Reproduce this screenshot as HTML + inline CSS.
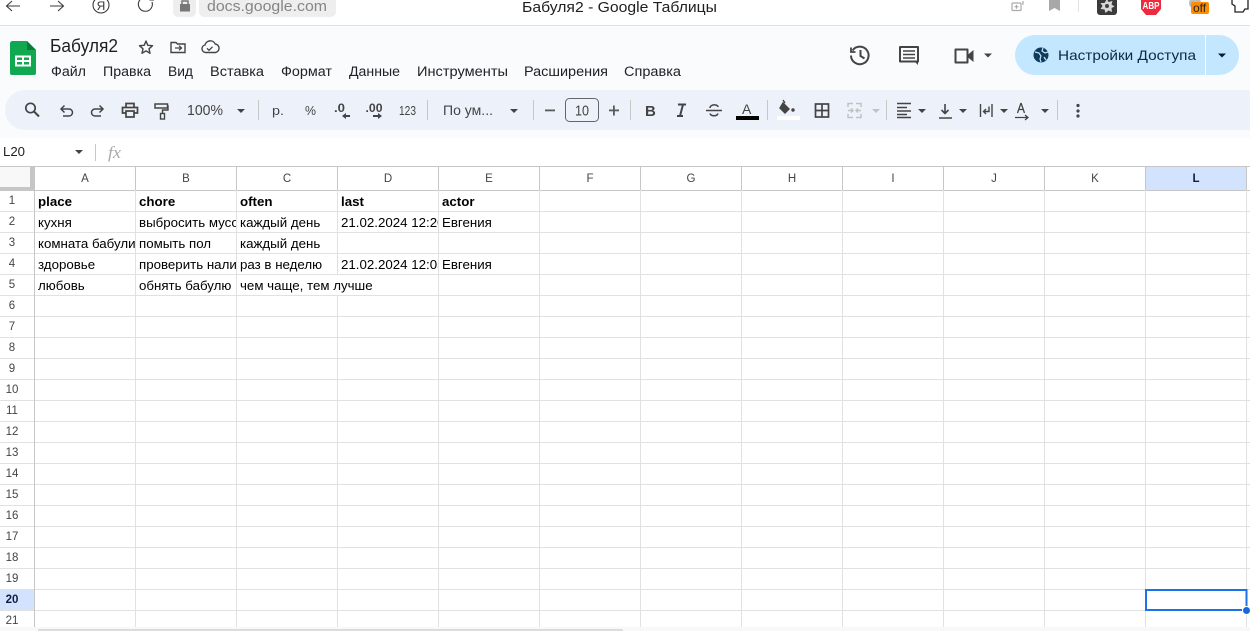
<!DOCTYPE html>
<html><head><meta charset="utf-8"><style>
html,body{margin:0;padding:0;width:1250px;height:631px;overflow:hidden;background:#fff}
svg{position:absolute;left:0;top:0;font-family:"Liberation Sans",sans-serif}
.c{position:absolute;height:20px;font:13.3px/22px "Liberation Sans",sans-serif;color:#000;white-space:nowrap;overflow:hidden;background:#fff;padding-left:3px;box-sizing:border-box}
.b{font-weight:bold}
</style></head><body>
<svg width="1250" height="631" viewBox="0 0 1250 631" xmlns="http://www.w3.org/2000/svg">
<rect width="1250" height="25" fill="#fff"/>
<rect y="25" width="1250" height="1" fill="#e0e0e0"/>
<rect y="26" width="1250" height="112" fill="#f9fbfd"/>
<rect y="138" width="1250" height="29" fill="#fff"/>
<!-- browser bar -->
<g fill="none" stroke="#3a3a3a" stroke-width="1.100">
<path d="M20 6H7M12 1L6.500 6l5.500 5"/>
<path d="M50 6H63M58 1l5.500 5L58 11"/>
<circle cx="101" cy="5" r="8"/>
<path d="M152 2a7 7 0 1 1-2-3M150 -4v4h4"/>
</g>
<text x="101" y="10" font-size="12" text-anchor="middle" fill="#333">Я</text>
<rect x="173" y="-5" width="23" height="22" rx="5" fill="#eeeeee"/>
<rect x="199" y="-5" width="137" height="22" rx="5" fill="#eeeeee"/>
<path d="M180 4h10v7.500h-10z" fill="#777"/><path d="M182 4V1h6v3" fill="none" stroke="#777" stroke-width="1.500"/>
<text x="207" y="11" font-size="15" fill="#858585" textLength="120" lengthAdjust="spacingAndGlyphs">docs.google.com</text>
<text x="522" y="12" font-size="15" fill="#202020" textLength="195" lengthAdjust="spacingAndGlyphs">Бабуля2 - Google Таблицы</text>
<!-- extensions -->
<g fill="none" stroke="#aaa" stroke-width="1.200"><rect x="1012" y="3" width="9" height="7.500" rx="1"/><path d="M1014.500 6.700h4M1016.500 4.700v4M1023 1v3h-1"/></g>
<path d="M1049 0h11v11l-5.500-3-5.500 3z" fill="#a8a8a8"/>
<rect x="1078" y="0" width="1" height="12" fill="#e3e3e3"/>
<rect x="1097" y="-3" width="20" height="18" rx="3" fill="#3b3b3b"/>
<path d="M1107 -1l1.500 3 4-1-1 3.500 3 2-3 1.500 .5 4-3.500-1.500-3 2.500-1-3.500-4-.5 2-3-2-3 4 0z" fill="#d8d8d8"/>
<circle cx="1107" cy="6" r="2" fill="#444"/>
<path d="M1141 -3h20v12l-5 6h-10l-5-6z" fill="#ee2a3f"/>
<text x="1151" y="9" font-size="10.500" font-weight="bold" fill="#fff" text-anchor="middle" textLength="17" lengthAdjust="spacingAndGlyphs">ABP</text>
<circle cx="1195" cy="3" r="6" fill="#bbb"/>
<rect x="1191" y="2" width="18" height="12" rx="2" fill="#ff8c00"/>
<text x="1199.500" y="12" font-size="12" fill="#222" text-anchor="middle">off</text>
<path d="M1232 0v4l3 2v6h8l2-3h3V0" fill="#fff" stroke="#222" stroke-width="1.300"/>
<!-- logo -->
<path d="M12.500 41H27l9 9v23a2 2 0 0 1-2 2H12a2 2 0 0 1-2-2V43.500a2.500 2.500 0 0 1 2.500-2.500z" fill="#10a850"/>
<path d="M27 41l9 9h-9z" fill="#0b7a3c"/>
<path d="M15 55.500h16v11H15z" fill="#fff"/>
<path d="M17 57.500h5v2.500h-5zM24 57.500h5v2.500h-5zM17 62h5v2.500h-5zM24 62h5v2.500h-5z" fill="#10a850"/>
<text x="50" y="52" font-size="18" fill="#1f1f1f" textLength="68" lengthAdjust="spacingAndGlyphs">Бабуля2</text>
<g fill="none" stroke="#444" stroke-width="1.400">
<path d="M146 41l1.800 4.300 4.700.4-3.500 3.100 1 4.500-4-2.400-4 2.400 1-4.500-3.500-3.100 4.700-.4z" stroke-linejoin="round"/>
<path d="M171 42.500h5l1.500 1.500h7.500v8.500h-14z"/>
<path d="M175 48h6M179 45.700l2.500 2.300-2.500 2.300" stroke-width="1.300"/>
<path d="M205.500 52.500a3.800 3.800 0 0 1-.5-7.500 5.500 5.500 0 0 1 10.300-1 4.300 4.300 0 0 1 .2 8.500z"/>
<path d="M207 48.300l2 2 3.500-3.500" stroke-width="1.300"/>
</g>
<g font-size="13.500" fill="#202124">
<text x="51" y="76" textLength="35" lengthAdjust="spacingAndGlyphs">Файл</text>
<text x="103" y="76" textLength="48" lengthAdjust="spacingAndGlyphs">Правка</text>
<text x="168" y="76" textLength="25" lengthAdjust="spacingAndGlyphs">Вид</text>
<text x="210" y="76" textLength="54" lengthAdjust="spacingAndGlyphs">Вставка</text>
<text x="281" y="76" textLength="51" lengthAdjust="spacingAndGlyphs">Формат</text>
<text x="349" y="76" textLength="51" lengthAdjust="spacingAndGlyphs">Данные</text>
<text x="417" y="76" textLength="91" lengthAdjust="spacingAndGlyphs">Инструменты</text>
<text x="524" y="76" textLength="84" lengthAdjust="spacingAndGlyphs">Расширения</text>
<text x="624" y="76" textLength="57" lengthAdjust="spacingAndGlyphs">Справка</text>
</g>
<!-- right header -->
<g fill="none" stroke="#444" stroke-width="2">
<path d="M852.500 50.500a8.800 8.800 0 1 1-1.500 5"/><path d="M851 47.500v4.500h4.500" stroke-width="1.800"/><path d="M860.500 50v6l4 2.500"/>
<path d="M900 47h18v14.500h-18z" stroke-linejoin="round"/>
<path d="M903 51h12M903 54.500h12M903 58h12" stroke-width="1.500"/>
<path d="M955.500 49.500h12v13h-12z" stroke-linejoin="round"/>
</g>
<path d="M914 61h4v4z" fill="#444"/>
<path d="M967.500 55l6-5v12l-6-5z" fill="#444"/>
<path d="M984 53.500h8l-4 4z" fill="#444"/>
<rect x="1015" y="35" width="224" height="40" rx="20" fill="#c2e7ff"/>
<rect x="1205" y="35" width="1" height="40" fill="#fff"/>
<circle cx="1041" cy="55" r="7.500" fill="#0f3a5a"/>
<path d="M1035 52l4 1 2 3-1 3 1 3M1043 48l-1 3 3 2 3-1M1044 57l2 3" fill="none" stroke="#c2e7ff" stroke-width="1.200"/>
<text x="1058" y="60" font-size="14" fill="#0b2a43" textLength="138" lengthAdjust="spacingAndGlyphs">Настройки Доступа</text>
<path d="M1218 53.500h8l-4 4z" fill="#001d35"/>
<!-- toolbar -->
<path d="M25 90H1250V130H25a20 20 0 0 1-20-20a20 20 0 0 1 20-20z" fill="#edf2fa"/>
<g fill="none" stroke="#444" stroke-width="1.700">
<circle cx="30.500" cy="108" r="4.700"/><path d="M34 111.500l5 5" stroke-width="2"/>
<path d="M62 109h7a3.500 3.500 0 0 1 0 7h-6M64.500 105.500L61 109l3.500 3.500" stroke-width="1.500"/>
<path d="M102 109h-7a3.500 3.500 0 0 0 0 7h6M99.500 105.500L103 109l-3.500 3.500" stroke-width="1.500"/>
<path d="M126 108v-4.500h8v4.500M126 113h-3.500v-5.500h15v5.500H134M126 111h8v6h-8z"/>
<rect x="155" y="104" width="12.500" height="4" stroke-width="1.500"/>
<path d="M167.500 106h.500v4h-5.500v3" stroke-width="1.400"/>
<rect x="160.500" y="113.500" width="4" height="5.500" stroke-width="1.400"/>
</g>
<g font-size="14" fill="#444">
<text x="187" y="115" font-size="15" textLength="36" lengthAdjust="spacingAndGlyphs">100%</text>
<text x="272" y="115" font-size="13" textLength="12" lengthAdjust="spacingAndGlyphs">р.</text>
<text x="305" y="115" font-size="13" textLength="11" lengthAdjust="spacingAndGlyphs">%</text>
<text x="334" y="112" font-size="12" font-weight="bold" textLength="11" lengthAdjust="spacingAndGlyphs">.0</text>
<text x="365.500" y="112" font-size="12" font-weight="bold" textLength="17" lengthAdjust="spacingAndGlyphs">.00</text>
<text x="399" y="115" font-size="12.500" textLength="17" lengthAdjust="spacingAndGlyphs">123</text>
<text x="443" y="115" font-size="14" textLength="50" lengthAdjust="spacingAndGlyphs">По ум...</text>
<text x="575" y="115.500" font-size="15" textLength="14" lengthAdjust="spacingAndGlyphs">10</text>
</g>
<g fill="#444">
<path d="M237 109h8l-4 4zM510 109h8l-4 4zM918 109h8l-4 4zM959 109h8l-4 4zM1000 109h8l-4 4zM1041 109h8l-4 4z"/>
<path d="M342 116l4-3v2h4v2h-4v2zM373 115h5v-2l4 3-4 3v-2h-5z"/>
<rect x="258" y="100" width="1" height="20" fill="#c7c7c7"/>
<rect x="427" y="100" width="1" height="20" fill="#c7c7c7"/>
<rect x="533" y="100" width="1" height="20" fill="#c7c7c7"/>
<rect x="630" y="100" width="1" height="20" fill="#c7c7c7"/>
<rect x="767" y="100" width="1" height="20" fill="#c7c7c7"/>
<rect x="886" y="100" width="1" height="20" fill="#c7c7c7"/>
<rect x="1057" y="100" width="1" height="20" fill="#c7c7c7"/>
<rect x="545" y="109.500" width="10" height="1.800" fill="#5a5a5a"/>
<rect x="609" y="109.500" width="10" height="1.800" fill="#5a5a5a"/><rect x="613" y="105.500" width="1.800" height="10" fill="#5a5a5a"/>
<circle cx="1078" cy="105.500" r="1.600"/><circle cx="1078" cy="111" r="1.600"/><circle cx="1078" cy="116" r="1.600"/>
<circle cx="793" cy="110" r="1.700"/>
</g>
<rect x="565.500" y="98.500" width="33" height="23" rx="4" fill="none" stroke="#666" stroke-width="1"/>
<text x="645" y="116" font-size="15" font-weight="bold" fill="#444">B</text>
<path d="M678 104.500h8M677 116h6M683 104.500l-3 11.500" stroke="#444" stroke-width="2" fill="none"/>
<path d="M706 110.500h16M710 108c0-4 8-4 8-1M710 113.500c1 3 7 3 8 0" stroke="#444" stroke-width="1.500" fill="none"/>
<text x="742" y="114" font-size="14" fill="#444">A</text>
<rect x="736" y="116" width="23" height="4" fill="#000"/>
<path d="M783 103l6 6-4 4-5-5zM783 100l2 3" fill="#444" stroke="#444" stroke-width="1.400"/>
<rect x="777" y="116" width="23" height="4" fill="#fff"/>
<g fill="none" stroke="#444" stroke-width="1.700"><rect x="815.500" y="104" width="13" height="13"/><path d="M822 104v13M815.500 110.500h13"/></g>
<g fill="none" stroke="#c0c2c5" stroke-width="1.500"><path d="M848 107v-3.500h5M848 114v3.500h5M861 107v-3.500h-5M861 114v3.500h-5M848 110.500h5M851 108.500l2 2-2 2M861 110.500h-5M858 108.500l-2 2 2 2"/></g>
<path d="M872 109h8l-4 4z" fill="#c0c2c5"/>
<g stroke="#444" stroke-width="1.600" fill="none">
<path d="M897 103.500h14M897 107.500h10M897 111h14M897 114.500h10M897 117.500h14"/>
<path d="M945 104v9M941.500 110l3.500 3.500 3.500-3.500M939 118h13"/>
<path d="M980.500 104v13M992 104v13M989 106.500v5h-5M986 109l-2.500 2.500 2.500 2.500" stroke-width="1.400"/>
<path d="M1021 103l-3.500 10M1021 103l3.500 10M1018.800 109.500h4.500M1021 117.500h-6h13M1025 115l3 2.500-3 2.500" stroke-width="1.300"/>
</g>
<!-- name box -->
<text x="3" y="156" font-size="13" fill="#222" textLength="22" lengthAdjust="spacingAndGlyphs">L20</text>
<path d="M75 150h8l-4 4z" fill="#444"/>
<rect x="95" y="144" width="1" height="17" fill="#c7c7c7"/>
<text x="108" y="158" font-size="17" font-family="Liberation Serif" font-style="italic" fill="#aaa" textLength="13" lengthAdjust="spacingAndGlyphs">fx</text>
<!-- grid -->
<rect x="1146" y="167" width="100" height="23" fill="#d3e3fd"/>
<rect x="0" y="590" width="34" height="20" fill="#d3e3fd"/>
<path d="M0 190.500H1250M0 166.500H1250" stroke="#c4c7c5" fill="none"/>
<path d="M135.500 167V190M236.500 167V190M337.500 167V190M438.500 167V190M539.500 167V190M640.500 167V190M741.500 167V190M842.500 167V190M943.500 167V190M1044.500 167V190M1145.500 167V190M1246.500 167V190" stroke="#c4c7c5"/>
<path d="M135.500 190V627M236.500 190V627M337.500 190V627M438.500 190V627M539.500 190V627M640.500 190V627M741.500 190V627M842.500 190V627M943.500 190V627M1044.500 190V627M1145.500 190V627M1246.500 190V627" stroke="#e1e1e1"/>
<path d="M35 211.500H1250M35 232.500H1250M35 253.500H1250M35 274.500H1250M35 295.500H1250M35 316.500H1250M35 337.500H1250M35 358.500H1250M35 379.500H1250M35 400.500H1250M35 421.500H1250M35 442.500H1250M35 463.500H1250M35 484.500H1250M35 505.500H1250M35 526.500H1250M35 547.500H1250M35 568.500H1250M35 589.500H1250M35 610.500H1250" stroke="#e1e1e1"/>
<path d="M0 211.500H34M0 232.500H34M0 253.500H34M0 274.500H34M0 295.500H34M0 316.500H34M0 337.500H34M0 358.500H34M0 379.500H34M0 400.500H34M0 421.500H34M0 442.500H34M0 463.500H34M0 484.500H34M0 505.500H34M0 526.500H34M0 547.500H34M0 568.500H34M0 589.500H34M0 610.500H34" stroke="#e1e1e1"/>
<rect x="34" y="190" width="1" height="437" fill="#c4c7c5"/>
<rect x="0" y="167" width="30" height="20" fill="#f8f8f8"/>
<rect x="0" y="187" width="35" height="3" fill="#c4c7c5"/>
<rect x="30" y="167" width="5" height="23" fill="#c4c7c5"/>
<g font-size="11.500" fill="#444" text-anchor="middle">
<text x="85" y="182">A</text><text x="186" y="182">B</text><text x="287" y="182">C</text><text x="388" y="182">D</text><text x="489" y="182">E</text><text x="590" y="182">F</text><text x="691" y="182">G</text><text x="792" y="182">H</text><text x="893" y="182">I</text><text x="994" y="182">J</text><text x="1095" y="182">K</text><text x="1196" y="182" fill="#0b1f44" font-weight="bold">L</text>
<text x="12" y="204">1</text><text x="12" y="225">2</text><text x="12" y="246">3</text><text x="12" y="267">4</text><text x="12" y="288">5</text><text x="12" y="309">6</text><text x="12" y="330">7</text><text x="12" y="351">8</text><text x="12" y="372">9</text><text x="12" y="393">10</text><text x="12" y="414">11</text><text x="12" y="435">12</text><text x="12" y="456">13</text><text x="12" y="477">14</text><text x="12" y="498">15</text><text x="12" y="519">16</text><text x="12" y="540">17</text><text x="12" y="561">18</text><text x="12" y="582">19</text><text x="12" y="603" font-weight="bold" fill="#0b1f44">20</text><text x="12" y="624">21</text>
</g>
<!-- selection -->
<rect x="1146" y="590" width="100.500" height="20" fill="none" stroke="#1a73e8" stroke-width="2"/>
<circle cx="1246.500" cy="610.500" r="4" fill="#1a66d8" stroke="#fff" stroke-width="1"/>
<!-- scrollbar -->
<rect x="0" y="627" width="1250" height="4" fill="#f8f8f8"/>
<rect x="38" y="629" width="585" height="2" rx="1" fill="#dadce0"/>
</svg>
<div class="c b" style="left:35px;top:191px;width:100px">place</div>
<div class="c b" style="left:136px;top:191px;width:100px">chore</div>
<div class="c b" style="left:237px;top:191px;width:100px">often</div>
<div class="c b" style="left:338px;top:191px;width:100px">last</div>
<div class="c b" style="left:439px;top:191px;width:100px">actor</div>
<div class="c" style="left:35px;top:212px;width:100px">кухня</div>
<div class="c" style="left:136px;top:212px;width:100px">выбросить мусор</div>
<div class="c" style="left:237px;top:212px;width:100px">каждый день</div>
<div class="c" style="left:338px;top:212px;width:100px">21.02.2024 12:20</div>
<div class="c" style="left:439px;top:212px;width:100px">Евгения</div>
<div class="c" style="left:35px;top:233px;width:100px">комната бабули</div>
<div class="c" style="left:136px;top:233px;width:100px">помыть пол</div>
<div class="c" style="left:237px;top:233px;width:100px">каждый день</div>
<div class="c" style="left:35px;top:254px;width:100px">здоровье</div>
<div class="c" style="left:136px;top:254px;width:100px">проверить наличие</div>
<div class="c" style="left:237px;top:254px;width:100px">раз в неделю</div>
<div class="c" style="left:338px;top:254px;width:100px">21.02.2024 12:05</div>
<div class="c" style="left:439px;top:254px;width:100px">Евгения</div>
<div class="c" style="left:35px;top:275px;width:100px">любовь</div>
<div class="c" style="left:136px;top:275px;width:100px">обнять бабулю</div>
<div class="c" style="left:237px;top:275px;width:201px">чем чаще, тем лучше</div>
</body></html>
